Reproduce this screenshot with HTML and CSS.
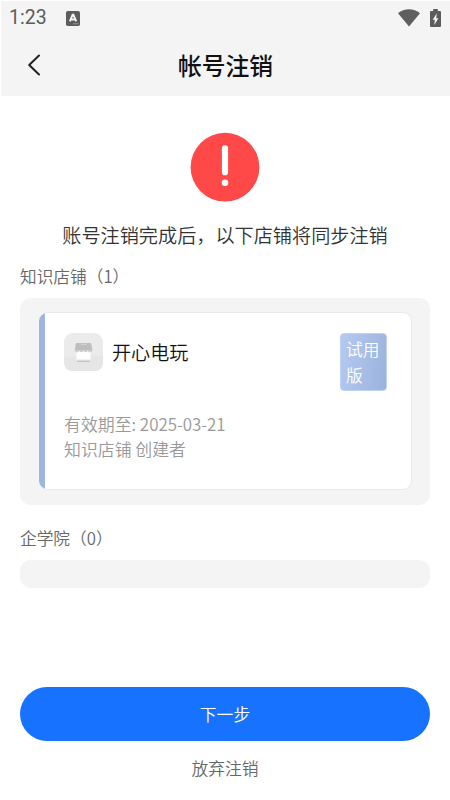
FILE: index.html
```html
<!DOCTYPE html>
<html lang="zh-CN">
<head>
<meta charset="utf-8">
<title>帐号注销</title>
<link rel="stylesheet" href="styles.css">
</head>
<body>
<div class="screen">
  <header class="top">
    <div class="status">
      <span class="clock">1:23</span>
      <svg class="input-icon" width="14" height="15" viewBox="0 0 14 15"><rect width="14" height="15" rx="1.8" fill="#5c5c5c"/><path d="M3.8 10.4 6.6 3.8h.8l2.8 6.6M5 8.5h4" fill="none" stroke="#f4f4f4" stroke-width="1.9"/><path d="M7 12.8h5.5" stroke="#aaa" stroke-width=".8"/></svg>
      <svg class="wifi" width="22" height="18" viewBox="0 0 22 18"><path d="M0 4.3C6.2-1.2 15.8-1.2 22 4.3L11 17.6z" fill="#5f5f5f"/></svg>
      <svg width="11" height="19" viewBox="0 0 11 19"><path d="M3.2 0h4.6v2H10q1 0 1 1v14q0 1-1 1H1q-1 0-1-1V3q0-1 1-1h2.2z" fill="#5c5c5c"/><path d="M6.8 4.2 2.7 10.7h2.1l-.5 5.3L8.4 9.3H6.2z" fill="#f4f4f4"/></svg>
    </div>
    <div class="nav">
      <svg class="back" width="14" height="22" viewBox="0 0 14 22"><path d="M12 1.5 2.2 11l9.8 9.5" fill="none" stroke="#222" stroke-width="2" stroke-linecap="round" stroke-linejoin="round"/></svg>
      <h1>帐号注销</h1>
    </div>
  </header>
  <main>
    <svg class="alert" width="70" height="70" viewBox="0 0 70 70"><circle cx="35" cy="35.2" r="34.4" fill="#ff4848"/><path d="M35 16.4v23.8" stroke="#fff" stroke-width="6.2" stroke-linecap="round"/><circle cx="35" cy="50.8" r="3.3" fill="#fff"/></svg>
    <p class="notice">账号注销完成后，以下店铺将同步注销</p>
    <h2>知识店铺（1）</h2>
    <section class="panel">
      <article class="card">
        <div class="card-head">
          <svg class="shop-icon" width="39" height="38" viewBox="0 0 39 38"><rect width="39" height="38" rx="9" fill="#ebebeb"/><path d="M0 25q19-4 39-2v6q0 9-9 9H9q-9 0-9-9z" fill="#e6e6e6"/><path d="M12.5 15h14v11.5h-14z" fill="#fff"/><path d="M13 10h13q1.2 0 1.4 1.2l1 6.3H10.7l1-6.3Q12 10 13 10z" fill="#bebebe"/><path d="M10.7 17h17.7q0 2.4-2.2 2.4T23.8 17.5q-.3 1.7-2.2 1.7t-2.1-1.7q-.3 1.7-2.2 1.7t-2.2-1.7q-.3 1.9-2.3 1.9T10.7 17z" fill="#cecece"/><path d="M17 10.8h5.5v1H17z" fill="#d8d8d8"/><path d="M13.5 28.3h12" stroke="#c4c4c4" stroke-width="1.3" stroke-linecap="round"/></svg>
          <h3>开心电玩</h3>
          <span class="tag">试用版</span>
        </div>
        <p class="meta">有效期至: 2025-03-21<br>知识店铺 创建者</p>
      </article>
    </section>
    <h2 class="academy">企学院（0）</h2>
    <section class="panel empty"></section>
  </main>
  <footer>
    <button class="next">下一步</button>
    <button class="cancel">放弃注销</button>
  </footer>
</div>
</body>
</html>
```
FILE: styles.css
```css
* { box-sizing: border-box; margin: 0; padding: 0; }
body {
  background: #fff;
  font-family: "Noto Sans CJK SC", sans-serif;
  font-weight: 350;
}
h2, h3 { font-weight: 350; }
svg { display: block; flex: none; }
.screen {
  width: 450px;
  height: 800px;
  padding: 1px 0 0 1px;
  display: flex;
  flex-direction: column;
  overflow: hidden;
}
.top { height: 95px; background: #f4f4f4; }
.status {
  height: 34px;
  display: flex;
  align-items: center;
  padding: 0 9px 0 8px;
}
.clock {
  width: 57px;
  font: 19.5px/34px Roboto, sans-serif;
  color: #5c5c5c;
}
.wifi { margin: 0 10px 0 auto; }
.nav {
  height: 60px;
  display: grid;
  grid-template-columns: 48px 1fr 48px;
  align-items: center;
}
.back { margin-left: 26px; }
h1 {
  text-align: center;
  font-size: 23.8px;
  line-height: 34px;
  font-weight: 500;
  color: #111;
}
main {
  flex: 1;
  padding: 36px 20px 0 19px;
}
.alert { margin: 0 auto; }
.notice {
  margin-top: 19px;
  text-align: center;
  font-size: 19.15px;
  line-height: 28px;
  color: #333;
  white-space: nowrap;
}
h2 {
  margin-top: 15px;
  font-size: 16.7px;
  line-height: 24px;
  color: #666;
}
.panel {
  margin-top: 10px;
  height: 207px;
  padding: 14px 18px 14px 19px;
  border-radius: 11px;
  background: #f4f4f4;
}
.card {
  height: 178px;
  padding: 20px 24px 0 25px;
  border: 1px solid #e9e9e9;
  border-left: 0;
  border-radius: 9px;
  background: linear-gradient(90deg, #9db5e1 6px, #fff 6px);
}
.card-head {
  display: flex;
  align-items: flex-start;
  height: 76px;
}
h3 {
  margin-left: 9px;
  font-size: 19.1px;
  line-height: 38px;
  color: #111;
}
.tag {
  width: 47px;
  height: 58px;
  margin-left: auto;
  padding: 3px 0 0 5px;
  border: 1px solid #bdd0f5;
  border-radius: 4px;
  background: linear-gradient(100deg, #b5caf1, #9bb2dc);
  font-size: 16.7px;
  line-height: 25.5px;
  color: #fff;
}
.meta {
  margin-top: 2px;
  font-size: 16.9px;
  line-height: 25px;
  color: #999;
}
.academy { margin-top: 21px; }
.empty { height: 28px; padding: 0; }
footer {
  height: 113px;
  padding: 0 20px 0 19px;
  display: flex;
  flex-direction: column;
  align-items: center;
}
button {
  border: 0;
  background: none;
  font-family: inherit;
  font-weight: inherit;
  font-size: 16.8px;
}
.next {
  width: 100%;
  height: 54px;
  border-radius: 27px;
  background: #1672ff;
  color: #fff;
}
.cancel {
  margin-top: 15px;
  line-height: 25px;
  color: #666;
}
```
